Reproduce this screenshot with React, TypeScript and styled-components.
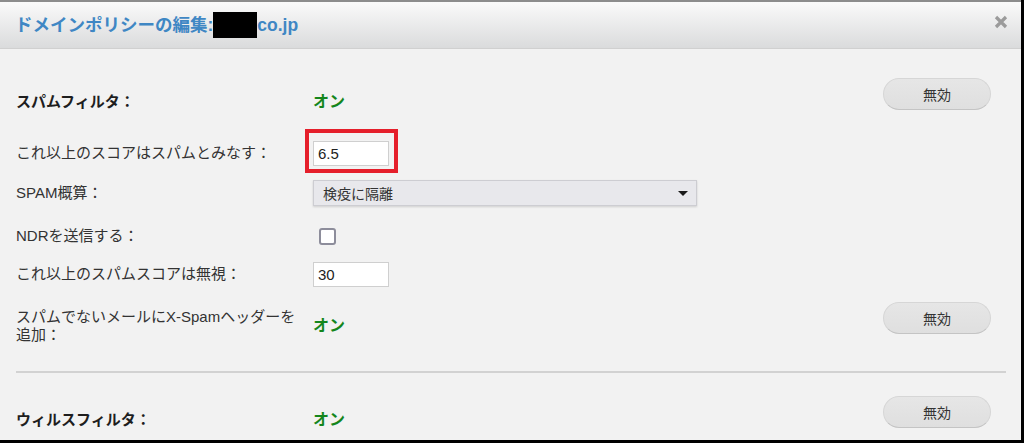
import React from 'react';
import styled, { createGlobalStyle } from 'styled-components';

const GlobalStyle = createGlobalStyle`
  html, body {
    margin: 0;
    padding: 0;
    background: #000;
  }
  body {
    font-family: 'Liberation Sans', 'Noto Sans CJK JP', sans-serif;
    color: #222;
  }
`;

const Dialog = styled.div`
  width: 1021px;
  height: 440px;
  background-color: #f2f2f2;
  overflow: hidden;
  display: flex;
  flex-direction: column;
`;

const Header = styled.div`
  height: 46px;
  flex-shrink: 0;
  border-top: 2px solid #8c8c8c;
  border-bottom: 1px solid #d0d0d0;
  background: linear-gradient(#fafafa, #dadbdc);
  display: flex;
  align-items: center;
  justify-content: space-between;
  padding: 0 12px 0 15px;
`;

const Title = styled.h2`
  margin: 0;
  font-size: 17.5px;
  font-weight: 700;
  color: #3f87c4;
  display: flex;
  align-items: center;
  line-height: 22px;
`;

const Redacted = styled.span`
  display: inline-block;
  width: 44px;
  height: 26px;
  background-color: #000;
`;

const CloseButton = styled.button`
  border: none;
  background: none;
  padding: 0;
  margin: 0 0 6px;
  width: 16px;
  height: 16px;
  display: flex;
  align-items: center;
  justify-content: center;
  cursor: pointer;
`;

const Body = styled.div`
  padding: 29px 15px 0 16px;
`;

const Row = styled.div<{ $mt?: number; $h?: number }>`
  display: grid;
  grid-template-columns: 297px 1fr 108px;
  align-items: center;
  margin-top: ${p => p.$mt ?? 0}px;
  min-height: ${p => p.$h ?? 32}px;
  padding-right: 15px;
`;

const Label = styled.div<{ $bold?: boolean }>`
  font-size: 15px;
  line-height: 18px;
  font-weight: ${p => (p.$bold ? 700 : 400)};
  color: ${p => (p.$bold ? '#1e1e1e' : '#333')};
  padding-right: 12px;
`;

const Value = styled.div`
  display: flex;
  align-items: center;
`;

const OnText = styled.span`
  font-size: 16px;
  font-weight: 700;
  color: #14861c;
  line-height: 20px;
`;

const ToggleButton = styled.button`
  align-self: start;
  width: 108px;
  height: 32px;
  border-radius: 16px;
  border: 1px solid #d6d6d6;
  border-bottom-color: #c4c4c4;
  background: linear-gradient(#e6e6e6, #dfdfdf);
  font-family: 'Liberation Sans', 'Noto Sans CJK JP', sans-serif;
  font-size: 14px;
  color: #333;
  cursor: pointer;
`;

const Highlight = styled.span`
  position: relative;
  display: inline-flex;
  &::after {
    content: '';
    position: absolute;
    left: -8px;
    right: -9px;
    top: -12px;
    bottom: -7px;
    border: 4px solid #e51f2b;
    pointer-events: none;
  }
`;

const TextInput = styled.input`
  box-sizing: border-box;
  width: 76px;
  height: 25px;
  border: 1px solid #cfcfcf;
  background: #fff;
  padding: 0 4px;
  font-family: 'Liberation Sans', 'Noto Sans CJK JP', sans-serif;
  font-size: 15px;
  color: #222;
  outline: none;
`;

const SelectBox = styled.div`
  box-sizing: border-box;
  width: 384px;
  height: 26px;
  border: 1px solid #cdcdd2;
  background: #e8e8ec;
  box-shadow: 0 1px 2px rgba(0, 0, 0, 0.15);
  display: flex;
  align-items: center;
  justify-content: space-between;
  padding: 0 8px 0 9px;
  font-size: 14px;
  color: #333;
`;

const Caret = styled.span`
  width: 0;
  height: 0;
  border-left: 5px solid transparent;
  border-right: 5px solid transparent;
  border-top: 5px solid #1a1a1a;
`;

const Checkbox = styled.input`
  appearance: none;
  box-sizing: border-box;
  margin: 0 0 0 6px;
  width: 17px;
  height: 17px;
  border: 2px solid #8d8d9b;
  border-radius: 3px;
  background: #fff;
`;

const Divider = styled.hr`
  margin: 21px 0 0;
  border: none;
  height: 2px;
  background: #d2d2d2;
`;

const CloseIcon = () => (
  <svg width="14" height="14" viewBox="0 0 14 14">
    <path d="M2 2 L12 12 M12 2 L2 12" stroke="#9b9b9b" strokeWidth="3.2" strokeLinecap="butt" />
  </svg>
);

export default function App() {
  return (
    <>
      <GlobalStyle />
      <Dialog>
        <Header>
          <Title>
            ドメインポリシーの編集:<Redacted />co.jp
          </Title>
          <CloseButton aria-label="close">
            <CloseIcon />
          </CloseButton>
        </Header>
        <Body>
          <Row $h={48}>
            <Label $bold>スパムフィルタ：</Label>
            <Value>
              <OnText>オン</OnText>
            </Value>
            <ToggleButton>無効</ToggleButton>
          </Row>
          <Row $mt={11}>
            <Label>これ以上のスコアはスパムとみなす：</Label>
            <Value>
              <Highlight>
                <TextInput defaultValue="6.5" />
              </Highlight>
            </Value>
          </Row>
          <Row $mt={8}>
            <Label>SPAM概算：</Label>
            <Value>
              <SelectBox>
                <span>検疫に隔離</span>
                <Caret />
              </SelectBox>
            </Value>
          </Row>
          <Row $mt={11}>
            <Label>NDRを送信する：</Label>
            <Value>
              <Checkbox type="checkbox" />
            </Value>
          </Row>
          <Row $mt={6}>
            <Label>これ以上のスパムスコアは無視：</Label>
            <Value>
              <TextInput defaultValue="30" />
            </Value>
          </Row>
          <Row $mt={12} $h={48}>
            <Label>スパムでないメールにX-Spamヘッダーを追加：</Label>
            <Value>
              <OnText>オン</OnText>
            </Value>
            <ToggleButton>無効</ToggleButton>
          </Row>
          <Divider />
          <Row $mt={23} $h={48}>
            <Label $bold>ウィルスフィルタ：</Label>
            <Value>
              <OnText>オン</OnText>
            </Value>
            <ToggleButton>無効</ToggleButton>
          </Row>
        </Body>
      </Dialog>
    </>
  );
}
